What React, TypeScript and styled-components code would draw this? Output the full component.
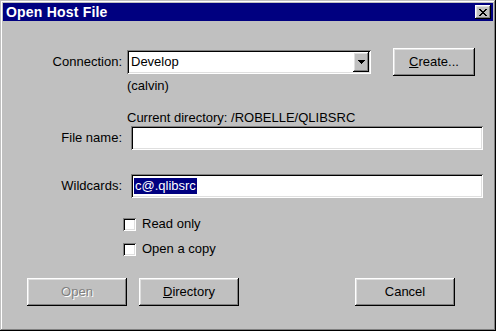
import React from "react";
import styled, { createGlobalStyle } from "styled-components";

const face = "#c0c0c0";
const shadow = "#808080";
const light = "#dfdfdf";
const navy = "#000080";

const GlobalStyle = createGlobalStyle`
  html, body {
    margin: 0;
    padding: 0;
    background: ${face};
  }
  body {
    font-family: "Liberation Sans", Arial, sans-serif;
    font-size: 13px;
    line-height: 16px;
    color: #000;
  }
`;

const Window = styled.div`
  width: 496px;
  height: 331px;
  box-sizing: border-box;
  padding: 3px;
  background: ${face};
  box-shadow: inset -1px -1px #000, inset 1px 1px ${face},
    inset -2px -2px ${shadow}, inset 2px 2px #fff;
  display: flex;
  flex-direction: column;
`;

// Title bar
const TitleBar = styled.div`
  height: 18px;
  background: ${navy};
  display: flex;
  align-items: center;
  justify-content: space-between;
  padding: 0 2px 0 3px;
`;

const Title = styled.span`
  color: #fff;
  font-weight: bold;
  font-size: 14px;
  letter-spacing: 0.2px;
`;

const Raised = styled.div`
  box-sizing: border-box;
  background: ${face};
  box-shadow: inset -1px -1px #000, inset 1px 1px #fff,
    inset -2px -2px ${shadow}, inset 2px 2px ${light};
  display: flex;
  align-items: center;
  justify-content: center;
`;

const CloseButton = styled(Raised)`
  width: 16px;
  height: 14px;
`;

// Form
const Body = styled.div`
  display: flex;
  flex-direction: column;
`;

const Row = styled.div<{ $top: number; $height?: number }>`
  display: flex;
  align-items: center;
  margin-top: ${(p) => p.$top}px;
  height: ${(p) => (p.$height ? `${p.$height}px` : "auto")};
`;

const Label = styled.label<{ $gap: number }>`
  width: 119px;
  margin-right: ${(p) => p.$gap}px;
  text-align: right;
  white-space: nowrap;
`;

const Note = styled.div<{ $top: number }>`
  margin-top: ${(p) => p.$top}px;
  margin-left: 124px;
  height: 16px;
  white-space: nowrap;
`;

const Sunken = styled.div<{ $width: number }>`
  box-sizing: border-box;
  width: ${(p) => p.$width}px;
  height: 24px;
  background: #fff;
  box-shadow: inset 1px 1px ${shadow}, inset -1px -1px #fff,
    inset 2px 2px #000, inset -2px -2px ${light};
  display: flex;
  align-items: center;
  padding: 0 2px 0 4px;
`;

const ComboText = styled.span`
  flex: 1;
`;

const DropButton = styled(Raised)`
  width: 16px;
  height: 20px;
`;

const Selected = styled.span`
  background: ${navy};
  color: #fff;
  padding: 0 1px;
  margin-left: -1px;
`;

const Check = styled.span`
  box-sizing: border-box;
  width: 13px;
  height: 13px;
  background: #fff;
  box-shadow: inset 1px 1px ${shadow}, inset -1px -1px #fff,
    inset 2px 2px #000, inset -2px -2px ${light};
  margin-left: 120px;
  margin-right: 6px;
`;

const Button = styled(Raised).attrs({ as: "button" })<{
  $width: number;
  $left: number;
  $disabled?: boolean;
}>`
  width: ${(p) => p.$width}px;
  height: 28px;
  margin-left: ${(p) => p.$left}px;
  border: none;
  padding: 0;
  font: inherit;
  color: ${(p) => (p.$disabled ? shadow : "#000")};
  text-shadow: ${(p) => (p.$disabled ? "1px 1px #fff" : "none")};
`;

const CloseGlyph = () => (
  <svg width="8" height="7" viewBox="0 0 8 7" shapeRendering="crispEdges">
    <path
      fill="#000"
      d="M0 0h2v1H0zM6 0h2v1H6zM1 1h2v1H1zM5 1h2v1H5zM2 2h4v1H2zM3 3h2v1H3zM2 4h4v1H2zM1 5h2v1H1zM5 5h2v1H5zM0 6h2v1H0zM6 6h2v1H6z"
    />
  </svg>
);

const ArrowGlyph = () => (
  <svg width="7" height="4" viewBox="0 0 7 4" shapeRendering="crispEdges">
    <path fill="#000" d="M0 0h7v1H0zM1 1h5v1H1zM2 2h3v1H2zM3 3h1v1H3z" />
  </svg>
);

export default function App() {
  return (
    <>
      <GlobalStyle />
      <Window>
        <TitleBar>
          <Title>Open Host File</Title>
          <CloseButton>
            <CloseGlyph />
          </CloseButton>
        </TitleBar>
        <Body>
          <Row $top={27} $height={28}>
            <Label $gap={5}>Connection:</Label>
            <Sunken $width={244}>
              <ComboText>Develop</ComboText>
              <DropButton>
                <ArrowGlyph />
              </DropButton>
            </Sunken>
            <Button $width={82} $left={22}>
              <span>
                <u>C</u>reate...
              </span>
            </Button>
          </Row>
          <Note $top={2}>(calvin)</Note>
          <Note $top={16}>Current directory: /ROBELLE/QLIBSRC</Note>
          <Row $top={0} $height={24}>
            <Label $gap={9}>File name:</Label>
            <Sunken $width={352} />
          </Row>
          <Row $top={24} $height={24}>
            <Label $gap={9}>Wildcards:</Label>
            <Sunken $width={352}>
              <Selected>c@.qlibsrc</Selected>
            </Sunken>
          </Row>
          <Row $top={18} $height={16}>
            <Check />
            <span>Read only</span>
          </Row>
          <Row $top={9} $height={16}>
            <Check />
            <span>Open a copy</span>
          </Row>
          <Row $top={21} $height={28}>
            <Button $width={100} $left={24} $disabled>
              Open
            </Button>
            <Button $width={100} $left={12}>
              <span>
                <u>D</u>irectory
              </span>
            </Button>
            <Button $width={100} $left={116}>
              Cancel
            </Button>
          </Row>
        </Body>
      </Window>
    </>
  );
}
